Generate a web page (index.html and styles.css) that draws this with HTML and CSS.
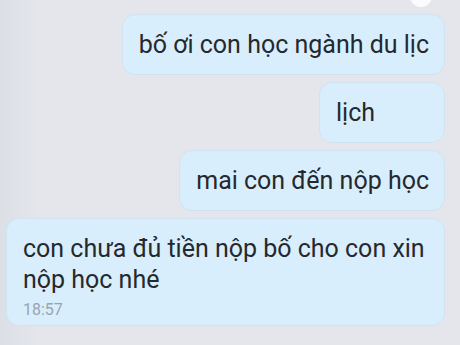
FILE: index.html
```html
<!DOCTYPE html>
<html lang="vi">
<head>
    <meta charset="UTF-8">
    <meta name="viewport" content="width=device-width, initial-scale=1.0">
    <title>Tin nhắn</title>
    <link rel="stylesheet" href="styles.css">
</head>
<body>
    <div class="chat">
        <span class="avatar-dot"></span>
        <div class="msg">bố ơi con học ngành du lịc</div>
        <div class="msg">lịch</div>
        <div class="msg">mai con đến nộp học</div>
        <div class="msg msg-last">
            con chưa đủ tiền nộp bố cho con xin nộp học nhé
            <div class="time">18:57</div>
        </div>
    </div>
</body>
</html>
```

FILE: styles.css
```css
body {
    padding: 0;
    margin: 0;
    background-color: #e4e6ec;
    font-family: Roboto, "Liberation Sans", Arial, sans-serif;
    color: #25292e;
}
* {box-sizing: border-box;}
.chat {
    position: relative;
    height: 345px;
    overflow: hidden;
    padding: 14px 15px 0 6px;
    display: flex;
    flex-direction: column;
    align-items: flex-end;
    gap: 7px;
    background: linear-gradient(to right, #dcdfe5, #e4e6ec 40px);
}
.avatar-dot {
    position: absolute;
    top: -15px;
    right: 28px;
    width: 22px;
    height: 22px;
    border-radius: 50%;
    background-color: #fbfbfd;
}
.msg {
    min-width: 126px;
    max-width: 100%;
    padding: 14px 15px 14px 16px;
    border: 1px solid #d2e3f0;
    border-radius: 13px;
    background-color: #d8eefc;
    font-size: 25px;
    line-height: 31px;
}
.msg-last {
    padding-bottom: 5px;
}
.time {
    margin-top: 5px;
    font-size: 16px;
    line-height: 20px;
    color: #9ba4ad;
}
```
